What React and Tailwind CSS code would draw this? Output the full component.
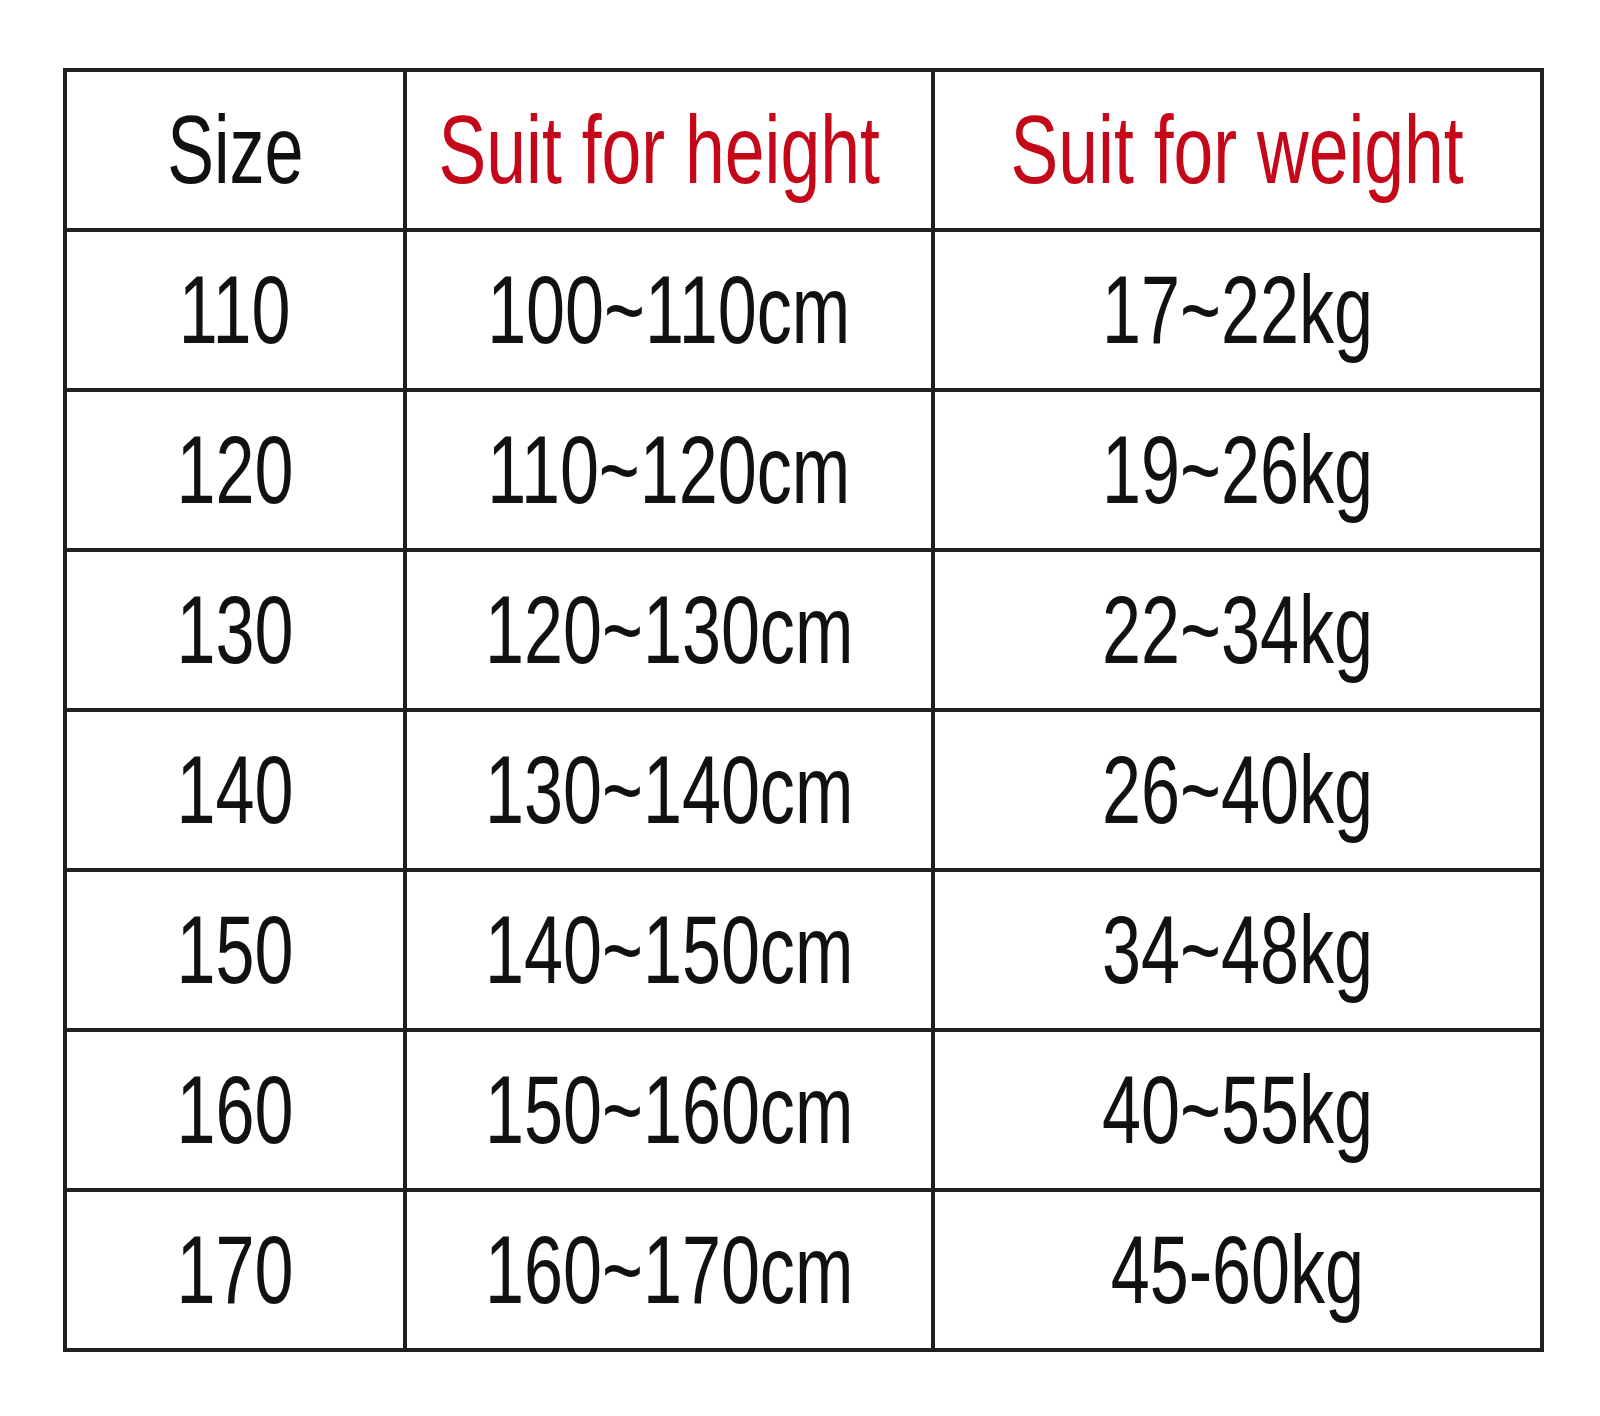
const rows = [
  ["110", "100~110cm", "17~22kg"],
  ["120", "110~120cm", "19~26kg"],
  ["130", "120~130cm", "22~34kg"],
  ["140", "130~140cm", "26~40kg"],
  ["150", "140~150cm", "34~48kg"],
  ["160", "150~160cm", "40~55kg"],
  ["170", "160~170cm", "45-60kg"],
];

function Cell({ children, red = false, className = "" }) {
  return (
    <div
      className={
        "flex h-[160px] items-center justify-center border-r-4 border-b-4 border-[#202020] " + className
      }
    >
      <span
        className={
          "inline-block whitespace-nowrap text-[96px] leading-none " +
          (red ? "scale-x-[0.745] text-[#c4081a]" : "scale-x-[0.73] text-[#111111]")
        }
      >
        {children}
      </span>
    </div>
  );
}

export default function App() {
  return (
    <div className="min-h-[1416px] w-[1600px] bg-white pt-[68px] pl-[63px] font-['Liberation_Sans',Arial,sans-serif]">
      <div className="grid w-fit grid-cols-[340px_528px_609px] border-l-4 border-t-4 border-[#202020]">
        <Cell>Size</Cell>
        <Cell red className="pr-[20px]">
          Suit for height
        </Cell>
        <Cell red>Suit for weight</Cell>
        {rows.map((r) => (
          <div key={r[0]} className="contents">
            <Cell>{r[0]}</Cell>
            <Cell>{r[1]}</Cell>
            <Cell>{r[2]}</Cell>
          </div>
        ))}
      </div>
    </div>
  );
}
